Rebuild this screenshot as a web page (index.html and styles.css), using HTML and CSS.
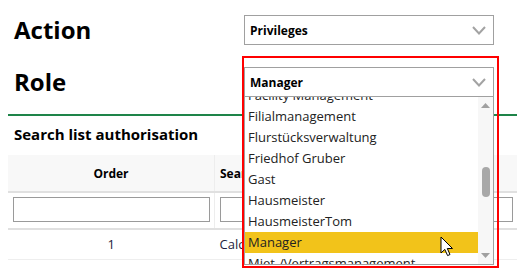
FILE: index.html
```html
<html>
    <head>
        <title>Authorisations</title>
        <link rel="stylesheet" href="styles.css">
    </head>
    <body>
        <div class="page">
            <div class="field">
                <h1 class="field-label">Action</h1>
                <div class="select">
                    <span>Privileges</span>
                    <svg class="chevron" width="14" height="9" viewBox="0 0 14 9"><path d="M1 1 L7 7.5 L13 1" fill="none" stroke="#a3a3a3" stroke-width="2"/></svg>
                </div>
            </div>

            <div class="field">
                <h1 class="field-label">Role</h1>
                <div class="select-wrap">
                    <div class="select">
                        <span>Manager</span>
                        <svg class="chevron" width="14" height="9" viewBox="0 0 14 9"><path d="M1 1 L7 7.5 L13 1" fill="none" stroke="#a3a3a3" stroke-width="2"/></svg>
                    </div>
                    <div class="dropdown">
                        <ul class="options">
                            <li>Facility Management</li>
                            <li>Filialmanagement</li>
                            <li>Flurstücksverwaltung</li>
                            <li>Friedhof Gruber</li>
                            <li>Gast</li>
                            <li>Hausmeister</li>
                            <li>HausmeisterTom</li>
                            <li class="selected">Manager</li>
                            <li>Miet-/Vertragsmanagement</li>
                        </ul>
                        <div class="scrollbar">
                            <svg class="arrow" width="9" height="5" viewBox="0 0 9 5"><path d="M0 5 L4.5 0 L9 5 Z" fill="#a0a0a0"/></svg>
                            <div class="thumb"></div>
                            <svg class="arrow arrow-down" width="9" height="5" viewBox="0 0 9 5"><path d="M0 0 L4.5 5 L9 0 Z" fill="#a0a0a0"/></svg>
                        </div>
                        <!-- mouse pointer over the selected entry -->
                        <svg class="pointer" width="14" height="21" viewBox="0 0 14 21"><path d="M1 1 L1 17 L4.8 13.4 L7.6 19.6 L10 18.5 L7.3 12.5 L12.5 12.5 Z" fill="#fff" stroke="#000" stroke-width="1" stroke-linejoin="round"/></svg>
                    </div>
                    <div class="focus-ring"></div>
                </div>
            </div>

            <hr class="divider">

            <h3 class="section-title">Search list authorisation</h3>

            <table class="grid">
                <tr>
                    <th class="col-order">Order</th>
                    <th class="col-search">Search list</th>
                </tr>
                <tr class="filter-row">
                    <td><input type="text"></td>
                    <td><input type="text"></td>
                </tr>
                <tr class="data-row">
                    <td class="center">1</td>
                    <td>Calculation</td>
                </tr>
            </table>
        </div>
    </body>
</html>
```

FILE: styles.css
```css
body {
    margin: 0;
    font-family: "Open Sans", "Noto Sans", sans-serif;
    color: #000;
    background: #fff;
    overflow: hidden;
}
.page {
    padding: 15px 0 0 8px;
}
.field {
    display: flex;
    align-items: center;
    margin-bottom: 22px;
}
.field-label {
    width: 230px;
    margin: 0;
    padding-left: 6px;
    font-size: 24px;
    line-height: 30px;
    font-weight: bold;
}
.select {
    box-sizing: border-box;
    width: 250px;
    height: 30px;
    border: 1px solid #a0a0a0;
    padding: 0 7px 0 5px;
    display: flex;
    align-items: center;
    justify-content: space-between;
    font-size: 12px;
    font-weight: bold;
    background: #fff;
}
.select-wrap {
    position: relative;
}
.dropdown {
    position: absolute;
    top: 30px;
    left: 0;
    box-sizing: border-box;
    width: 250px;
    height: 168px;
    border: 1px solid #a0a0a0;
    border-top: none;
    background: #fff;
    overflow: hidden;
}
.options {
    list-style: none;
    margin: -12px 15px 0 0;
    padding: 0;
    font-size: 13px;
    color: #222;
}
.options li {
    height: 21px;
    line-height: 21px;
    padding-left: 3px;
    white-space: nowrap;
}
.options .selected {
    background: #f2c31a;
}
.scrollbar {
    position: absolute;
    top: 0;
    right: 0;
    bottom: 0;
    width: 15px;
    background: #f7f7f7;
    display: flex;
    flex-direction: column;
    align-items: center;
}
.arrow {
    margin-top: 6px;
}
.thumb {
    width: 8px;
    height: 30px;
    margin-top: 59px;
    border-radius: 4px;
    background: #a8a8a8;
}
.arrow-down {
    margin-top: auto;
    margin-bottom: 6px;
}
.pointer {
    position: absolute;
    left: 195px;
    top: 139px;
}
.focus-ring {
    position: absolute;
    top: -11px;
    left: -2px;
    box-sizing: border-box;
    width: 257px;
    height: 212px;
    border: 2px solid #f00;
    pointer-events: none;
}
.divider {
    border: 0;
    border-top: 2px solid #1e8449;
    margin: -5px 0 0;
}
.section-title {
    margin: 8px 0 11px 6px;
    font-size: 15px;
    line-height: 20px;
}
.grid {
    width: 509px;
    border-collapse: collapse;
    font-size: 13px;
    table-layout: fixed;
}
.grid th {
    height: 37px;
    background: #f8f8f8;
    border-bottom: 2px solid #e0e0e0;
    padding: 0;
    font-size: 12px;
}
.col-order {
    width: 206px;
    border-right: 1px solid #ededed;
}
.col-search {
    text-align: left;
    padding-left: 5px !important;
}
.filter-row td {
    padding: 4px 4px 6px 5px;
    border-bottom: 2px solid #e0e0e0;
}
.filter-row td:first-child {
    border-right: 1px solid #ededed;
}
.filter-row input {
    box-sizing: border-box;
    width: 100%;
    height: 25px;
    border: 1px solid #9a9a9a;
    display: block;
}
.data-row td {
    height: 30px;
    padding: 0 5px;
    color: #1d1d40;
    border-bottom: 1px solid #eeeeee;
}
.center {
    text-align: center;
}
```
